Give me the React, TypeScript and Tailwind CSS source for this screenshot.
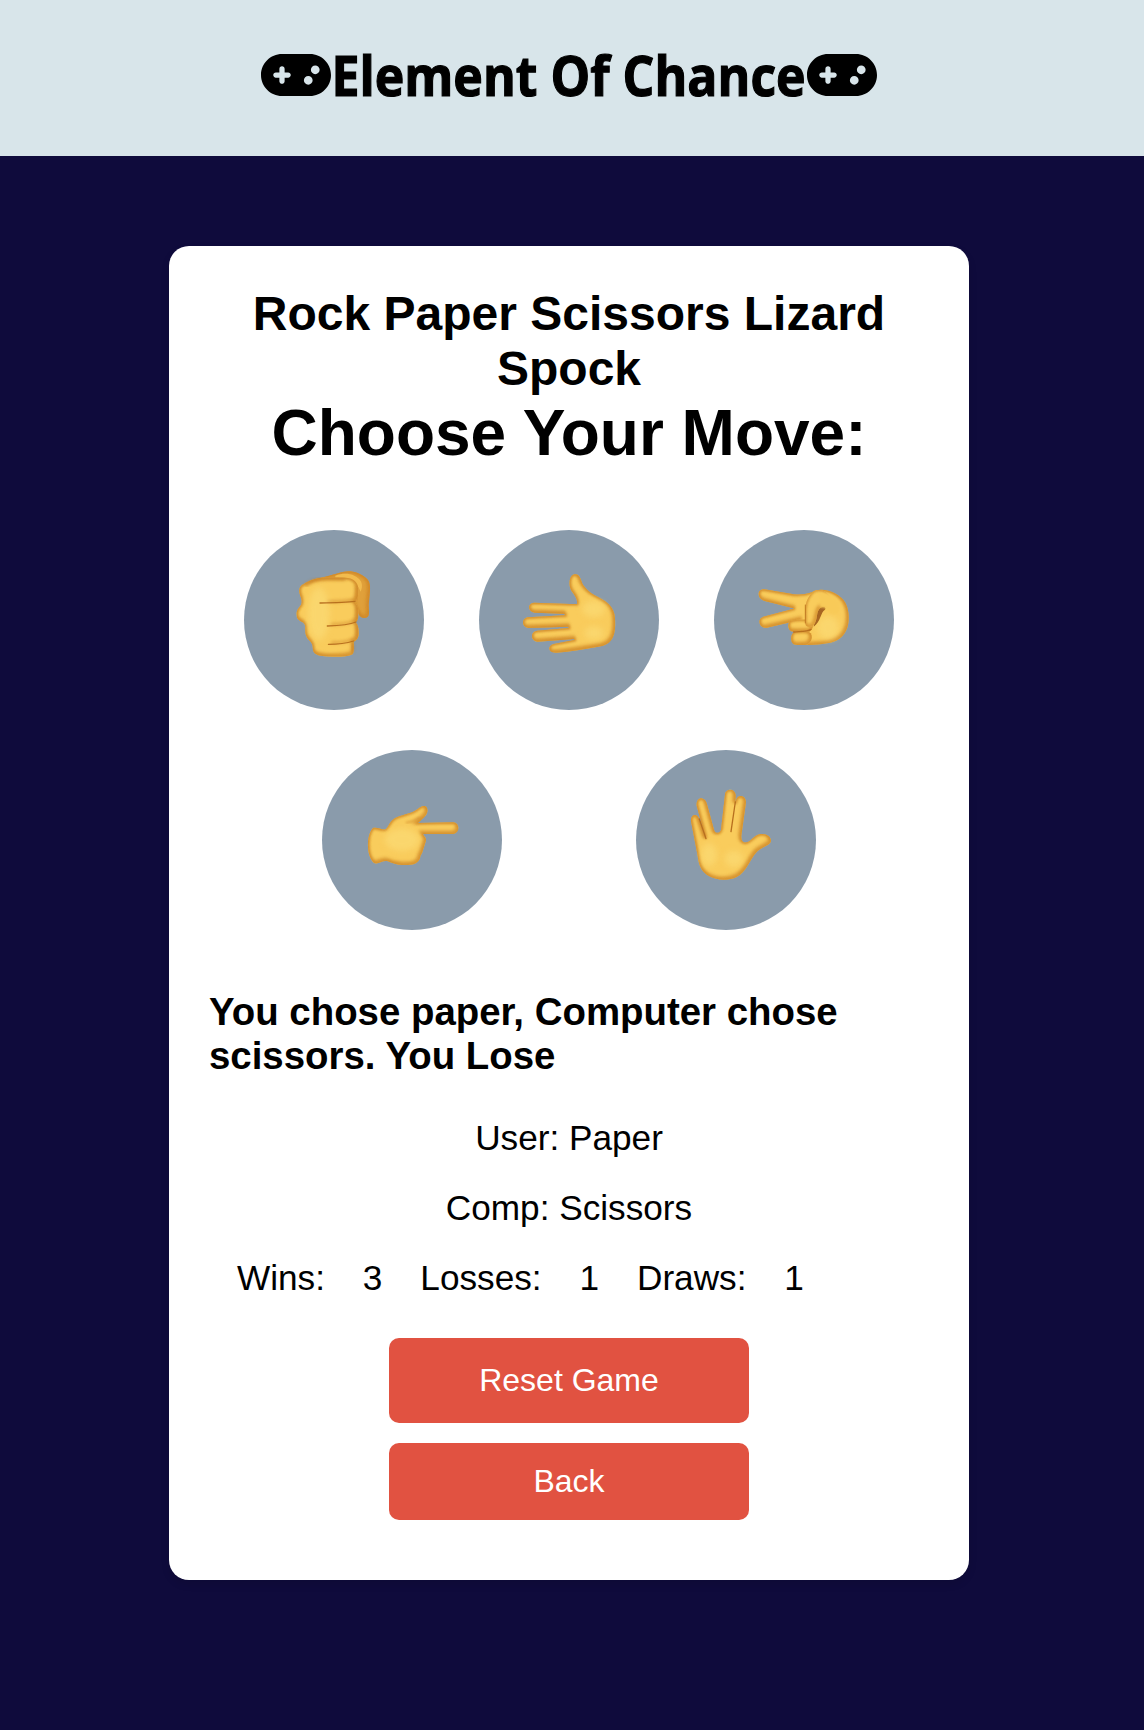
import type { ReactNode } from "react";
import { FaGamepad } from "react-icons/fa6";

type Shade = "light" | "dark";

function Part({ id, d, shade = "light", edge = 8 }: { id: string; d: string; shade?: Shade; edge?: number }) {
  return (
    <g>
      <clipPath id={id}>
        <path d={d} />
      </clipPath>
      <path d={d} fill={shade === "light" ? "#f9cc5c" : "#e0a03a"} />
      <g clipPath={`url(#${id})`} fill="none" stroke="#cf8628">
        <path d={d} strokeWidth={edge + 6} opacity="0.6" transform="translate(-3 -4)" filter="url(#soft)" />
        <path d={d} strokeWidth={edge} opacity="0.75" filter="url(#rim)" />
      </g>
    </g>
  );
}

function Crease({ d, width = 4 }: { d: string; width?: number }) {
  return <path d={d} fill="none" stroke="#b8701f" strokeWidth={width} strokeLinecap="round" filter="url(#fine)" />;
}

function Glow({ cx, cy, rx, ry }: { cx: number; cy: number; rx: number; ry: number }) {
  return <ellipse cx={cx} cy={cy} rx={rx} ry={ry} fill="#fbdb76" opacity="0.7" filter="url(#glow)" />;
}

function Fist() {
  return (
    <>
      <Part
        id="fist-thumb"
        shade="dark"
        d="M230 162C268 153 292 145 308 141C335 135 358 144 377 158C388 166 391 178 390 196L386 240L387 262C387 276 382 279 372 279C360 278 356 268 350 255L300 180Z"
      />
      <path d="M286 152C318 140 348 148 362 168C368 178 366 190 362 200C352 172 330 160 286 158Z" fill="#f2bb4e" filter="url(#fine)" />
      <Part
        id="fist-body"
        d="M183 218C174 196 177 184 190 178C213 163 230 159 259 157L315 158C340 159 353 170 355 190C357 209 352 226 344 232C354 240 356 255 355 268C355 280 353 286 347 292C353 299 356 308 356 321C357 336 352 345 341 350C342 367 342 378 339 386C330 394 310 395 280 395C239 395 222 390 219 376C218 366 219 360 213 352C206 344 196 336 196 318C196 305 197 299 188 292C178 286 170 284 170 270C168 256 178 248 184 238C186 230 185 224 183 218Z"
      />
      <path d="M196 182C214 167 236 162 262 162L316 163" fill="none" stroke="#c97f22" strokeWidth="9" opacity="0.75" filter="url(#soft)" />
      <path d="M349 184V226M350 242V284M350 302V340M337 358V382" fill="none" stroke="#c97f22" strokeWidth="7" opacity="0.6" filter="url(#soft)" />
      <path d="M260 230C290 230 322 228 345 224M272 298C300 298 328 294 346 287M274 353C300 353 324 349 342 344" fill="none" stroke="#d59130" strokeWidth="8" opacity="0.65" filter="url(#soft)" />
      <Glow cx={236} cy={266} rx={33} ry={80} />
      <Crease d="M240 234C280 233 318 232 345 229" />
      <Crease d="M262 303C299 302 329 299 348 291" />
      <Crease d="M265 358C296 358 322 354 341 348" width={3.5} />
    </>
  );
}

function Palm() {
  return (
    <>
      <Part
        id="palm"
        d="M306 237C309 222 297 208 289 197C280 181 282 151 298 148C313 145 317 162 321 173C330 191 344 202 362 212C392 228 418 241 420 280C424 335 410 360 370 365C331 371 285 380 244 383C217 384 218 361 236 357L298 345L297 342L188 350C166 348 165 320 186 317L281 309L280 305L160 309C139 306 139 281 158 277L270 271L268 266L179 263C157 260 157 234 177 233L285 237Z"
      />
      <Glow cx={356} cy={252} rx={34} ry={25} />
      <Glow cx={357} cy={324} rx={30} ry={20} />
    </>
  );
}

function Scissors() {
  return (
    <>
      <Part
        id="scissors-hand"
        d="M251 250L164 228C141 222 139 192 163 193L251 208C278 210 291 207 307 201C325 189 355 195 373 204C408 221 417 249 416 281C416 324 389 351 350 355C318 361 286 361 260 357L270 285L171 308C149 313 139 282 160 275L251 251Z"
      />
      <Glow cx={354} cy={308} rx={33} ry={36} />
      <Part
        id="scissors-ring"
        d="M244 287C235 289 232 303 238 314C243 323 261 320 298 320C310 313 312 299 302 286C285 282 261 283 244 287Z"
      />
      <Part
        id="scissors-little"
        d="M253 321C242 326 240 349 250 357C257 362 280 360 290 359C305 355 309 334 302 325C294 317 272 318 253 321Z"
      />
      <path d="M318 254C332 236 352 246 345 254C331 262 333 289 311 305Z" fill="#a76520" filter="url(#fine)" />
      <Part
        id="scissors-thumb"
        edge={5}
        d="M306 204C286 224 284 249 286 273L286 296C287 309 308 309 314 296C323 280 319 263 328 252C335 243 349 244 358 251C379 248 370 214 341 198C325 192 312 197 306 204Z"
      />
      <path d="M328 204C352 198 384 216 389 244C393 272 366 278 350 252C342 246 336 246 330 248Z" fill="#f8ca59" filter="url(#rim)" />
      <Crease d="M286 240L286 294" width={2.5} />
      <Crease d="M251 321C270 319 291 321 303 313" />
    </>
  );
}

function Pointer() {
  return (
    <>
      <Part
        id="pointer"
        edge={8}
        d="M165 249C180 246 191 256 203 253C214 243 215 225 238 216C260 208 283 205 298 193C308 184 319 179 326 187C332 199 326 211 316 219L300 234L405 232C426 233 427 264 405 267L315 267C319 277 327 278 323 290C320 299 318 306 315 315C314 325 306 330 306 340C298 363 270 360 251 360C234 359 221 354 210 349C194 344 179 361 167 353C145 333 144 271 165 249Z"
      />
      <Glow cx={252} cy={284} rx={52} ry={34} />
      <path d="M264 233C280 231 292 226 306 217" fill="none" stroke="#d59130" strokeWidth="6" opacity="0.6" filter="url(#rim)" />
    </>
  );
}

function Vulcan() {
  return (
    <>
      <Part
        id="vulcan"
        d="M221 281L194 182C192 154 219 153 225 178L246 254C248 266 262 267 267 255L279 149C280 129 310 129 311 151L310 176C311 146 341 147 342 172L328 272C327 287 333 295 344 292C359 289 364 271 385 267C404 265 417 274 417 289C413 303 385 307 372 323C354 344 342 382 314 396C293 407 257 408 232 394C206 379 200 357 197 332L177 229C174 208 196 203 201 221Z"
      />
      <Glow cx={231} cy={329} rx={24} ry={34} />
      <Glow cx={306} cy={342} rx={28} ry={25} />
      <Crease d="M202 222L222 281" />
      <Crease d="M310 171L297 260" />
    </>
  );
}

function Move({ label, children }: { label: string; children: ReactNode }) {
  return (
    <button aria-label={label} className="m-5 size-[180px] overflow-hidden rounded-full bg-[#8a9bab]">
      <svg viewBox="12 15 540 540" className="block size-full">
        {children}
      </svg>
    </button>
  );
}

export default function App() {
  return (
    <div className="min-h-[1730px] bg-[#0f0b3c] font-['Liberation_Sans',Arial,sans-serif] text-black">
      <svg className="absolute size-0">
        <defs>
          <filter id="soft" x="-20%" y="-20%" width="140%" height="140%">
            <feGaussianBlur stdDeviation="5" />
          </filter>
          <filter id="rim" x="-20%" y="-20%" width="140%" height="140%">
            <feGaussianBlur stdDeviation="2.5" />
          </filter>
          <filter id="fine" x="-10" y="-10" width="600" height="600" filterUnits="userSpaceOnUse">
            <feGaussianBlur stdDeviation="1.3" />
          </filter>
          <filter id="glow" x="-50%" y="-50%" width="200%" height="200%">
            <feGaussianBlur stdDeviation="10" />
          </filter>
        </defs>
      </svg>
      <header className="flex h-[156px] justify-center bg-[#d8e5ea] pt-[47px] pr-[6px]">
        <FaGamepad className="h-14 w-[70px] shrink-0" />
        <h1 className="flex h-[54px] w-[476px] items-center justify-center font-['Open_Sans',sans-serif] text-[56px] leading-[54px] font-bold whitespace-nowrap">
          <span className="inline-block scale-x-[0.893] [-webkit-text-stroke:1.2px_black] [stroke-linejoin:round]">
            Element Of Chance
          </span>
        </h1>
        <FaGamepad className="h-14 w-[70px] shrink-0" />
      </header>
      <main className="mt-[90px] ml-[169px] h-[1334px] w-[800px] rounded-[20px] bg-white p-10 shadow-[0_4px_8px_rgba(0,0,0,0.1)]">
        <h2 className="text-center text-5xl leading-[55px] font-bold">Rock Paper Scissors Lizard Spock</h2>
        <h2 className="text-center text-[64px] leading-[74px] font-bold">Choose Your Move:</h2>
        <div className="mt-10 flex flex-wrap justify-evenly">
          <Move label="Rock"><Fist /></Move>
          <Move label="Paper"><Palm /></Move>
          <Move label="Scissors"><Scissors /></Move>
          <Move label="Lizard"><Pointer /></Move>
          <Move label="Spock"><Vulcan /></Move>
        </div>
        <h3 className="mt-10 text-[38.4px] leading-[44px] font-bold">
          You chose paper, Computer chose scissors. You Lose
        </h3>
        <div className="mt-10 flex flex-col gap-[30px] text-[35.2px] leading-10">
          <p className="text-center">User: Paper</p>
          <p className="text-center">Comp: Scissors</p>
          <p className="flex gap-[37.9px] pl-7">
            <span>Wins:</span>
            <span>3</span>
            <span>Losses:</span>
            <span>1</span>
            <span>Draws:</span>
            <span>1</span>
          </p>
        </div>
        <div className="mt-10 flex flex-col items-center gap-5 text-[32px] leading-[36px] text-white">
          <button className="h-[85px] w-[360px] rounded-[10px] bg-[#e15241] pb-px">Reset Game</button>
          <button className="h-[77px] w-[360px] rounded-[10px] bg-[#e15241] pb-px">Back</button>
        </div>
      </main>
    </div>
  );
}
